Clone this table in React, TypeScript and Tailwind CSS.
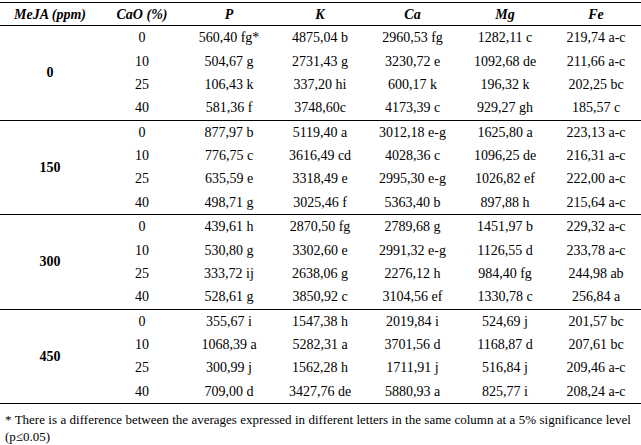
import React from 'react';

type Row = { cao: string; p: string; k: string; ca: string; mg: string; fe: string };

const groups: { meja: string; rows: Row[] }[] = [
  {
    meja: '0',
    rows: [
      { cao: '0', p: '560,40 fg*', k: '4875,04 b', ca: '2960,53 fg', mg: '1282,11 c', fe: '219,74 a-c' },
      { cao: '10', p: '504,67 g', k: '2731,43 g', ca: '3230,72 e', mg: '1092,68 de', fe: '211,66 a-c' },
      { cao: '25', p: '106,43 k', k: '337,20 hi', ca: '600,17 k', mg: '196,32 k', fe: '202,25 bc' },
      { cao: '40', p: '581,36 f', k: '3748,60c', ca: '4173,39 c', mg: '929,27 gh', fe: '185,57 c' },
    ],
  },
  {
    meja: '150',
    rows: [
      { cao: '0', p: '877,97 b', k: '5119,40 a', ca: '3012,18 e-g', mg: '1625,80 a', fe: '223,13 a-c' },
      { cao: '10', p: '776,75 c', k: '3616,49 cd', ca: '4028,36 c', mg: '1096,25 de', fe: '216,31 a-c' },
      { cao: '25', p: '635,59 e', k: '3318,49 e', ca: '2995,30 e-g', mg: '1026,82 ef', fe: '222,00 a-c' },
      { cao: '40', p: '498,71 g', k: '3025,46 f', ca: '5363,40 b', mg: '897,88 h', fe: '215,64 a-c' },
    ],
  },
  {
    meja: '300',
    rows: [
      { cao: '0', p: '439,61 h', k: '2870,50 fg', ca: '2789,68 g', mg: '1451,97 b', fe: '229,32 a-c' },
      { cao: '10', p: '530,80 g', k: '3302,60 e', ca: '2991,32 e-g', mg: '1126,55 d', fe: '233,78 a-c' },
      { cao: '25', p: '333,72 ij', k: '2638,06 g', ca: '2276,12 h', mg: '984,40 fg', fe: '244,98 ab' },
      { cao: '40', p: '528,61 g', k: '3850,92 c', ca: '3104,56 ef', mg: '1330,78 c', fe: '256,84 a' },
    ],
  },
  {
    meja: '450',
    rows: [
      { cao: '0', p: '355,67 i', k: '1547,38 h', ca: '2019,84 i', mg: '524,69 j', fe: '201,57 bc' },
      { cao: '10', p: '1068,39 a', k: '5282,31 a', ca: '3701,56 d', mg: '1168,87 d', fe: '207,61 bc' },
      { cao: '25', p: '300,99 j', k: '1562,28 h', ca: '1711,91 j', mg: '516,84 j', fe: '209,46 a-c' },
      { cao: '40', p: '709,00 d', k: '3427,76 de', ca: '5880,93 a', mg: '825,77 i', fe: '208,24 a-c' },
    ],
  },
];

const cols = 'grid grid-cols-[100px_84px_90px_92px_93px_92px_90px]';

export default function App() {
  return (
    <div
      className="w-[641px] h-[445px] bg-white text-black pt-[2px] overflow-hidden"
      style={{ fontFamily: '"Liberation Serif", "Times New Roman", serif' }}
    >
      <div className="border-t border-black">
        {/* header */}
        <div className={`${cols} h-[22px] items-center text-[14px] font-bold italic text-center`}>
          <div>MeJA (ppm)</div>
          <div>CaO (%)</div>
          <div>P</div>
          <div>K</div>
          <div>Ca</div>
          <div>Mg</div>
          <div>Fe</div>
        </div>

        {groups.map((g) => (
          <div
            key={g.meja}
            className={`${cols} grid-rows-[repeat(4,23.375px)] border-t border-black text-[14px] text-center items-center`}
          >
            <div className="row-span-4 font-bold self-center">{g.meja}</div>
            {g.rows.map((r) => (
              <React.Fragment key={r.cao}>
                <div className="col-start-2">{r.cao}</div>
                <div>{r.p}</div>
                <div>{r.k}</div>
                <div>{r.ca}</div>
                <div>{r.mg}</div>
                <div>{r.fe}</div>
              </React.Fragment>
            ))}
          </div>
        ))}
      </div>

      <div className="border-t border-black pt-[7px] pl-[5px] pr-[10px] text-[13px] leading-[17px] text-justify">
        * There is a difference between the averages expressed in different letters in the same column at a 5%
        significance level (p≤0.05)
      </div>
    </div>
  );
}
